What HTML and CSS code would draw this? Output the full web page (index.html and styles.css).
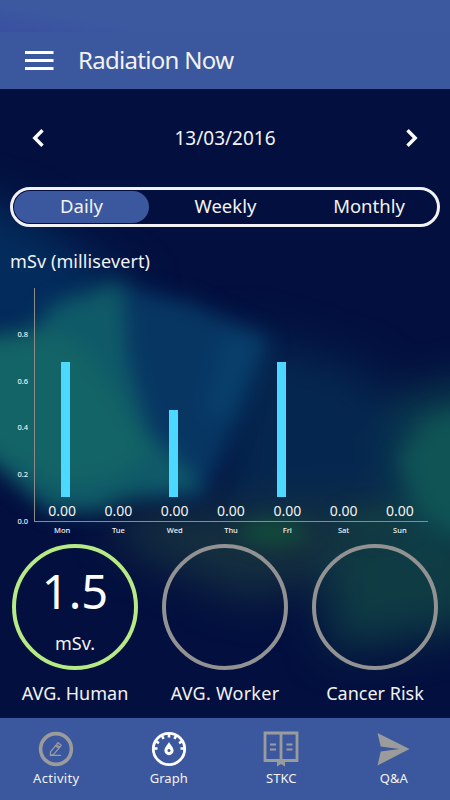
FILE: index.html
```html
<!DOCTYPE html>
<html lang="en">
<head>
  <meta charset="UTF-8">
  <meta name="viewport" content="width=device-width, initial-scale=1.0">
  <title>Radiation Now</title>
  <link rel="stylesheet" href="styles.css">
</head>
<body>
  <div class="app">
    <svg class="backdrop" viewBox="0 0 450 800" aria-hidden="true">
      <defs>
        <filter id="soft" x="-50%" y="-50%" width="200%" height="200%" color-interpolation-filters="sRGB"><feGaussianBlur stdDeviation="10"/></filter>
        <filter id="softer" x="-50%" y="-50%" width="200%" height="200%" color-interpolation-filters="sRGB"><feGaussianBlur stdDeviation="22"/></filter>
      </defs>
      <rect width="450" height="800" fill="#03103f"/>
      <g filter="url(#softer)">
        <polygon points="-60,190 20,210 140,290 60,360 -60,340" fill="#032c5c"/>
        <polygon points="235,330 370,370 420,470 400,530 220,530" fill="#05274f"/>
        <polygon points="110,510 420,500 420,545 250,600 130,550" fill="#15303f"/>
        <polygon points="395,400 490,380 490,640 400,560" fill="#0c4450"/>
        <polygon points="325,540 490,530 490,625 330,650" fill="#0f3c44"/>
      </g>
      <g filter="url(#soft)">
        <polygon points="120,285 190,302 270,338 225,450 200,500 100,500" fill="#073663"/>
        <polygon points="225,330 266,340 232,425 205,410" fill="#083f6b"/>
        <polygon points="-30,338 35,328 52,305 122,280 128,360 148,430 205,488 130,498 100,512 50,512 -30,445" fill="#0f5a68"/>
        <polygon points="-30,342 50,332 85,350 150,450 120,475 60,485 -30,440" fill="#136466"/>
        <polygon points="400,458 428,422 480,405 480,550 420,510" fill="#105455"/>
        <ellipse cx="273" cy="532" rx="34" ry="11" fill="#12503a"/>
        <ellipse cx="375" cy="522" rx="36" ry="12" fill="#113c43"/>
      </g>
    </svg>

    <div class="status-bar"></div>
    <header class="header">
      <svg class="menu-icon" width="29" height="20" viewBox="0 0 29 20">
        <path d="M0 2.500h28.500M0 10.500h28.500M0 18.500h28.500" stroke="#fff" stroke-width="3"/>
      </svg>
      <h1 class="title">Radiation Now</h1>
    </header>

    <div class="date-row">
      <svg width="12" height="18" viewBox="0 0 12 18"><path d="M10.500 1.200L2.800 9l7.700 7.800" fill="none" stroke="#fff" stroke-width="3.400"/></svg>
      <span class="date">13/03/2016</span>
      <svg width="12" height="18" viewBox="0 0 12 18"><path d="M1.500 1.200L9.200 9l-7.700 7.800" fill="none" stroke="#fff" stroke-width="3.400"/></svg>
    </div>

    <div class="tabs">
      <div class="tab active">Daily</div>
      <div class="tab weekly">Weekly</div>
      <div class="tab monthly">Monthly</div>
    </div>

    <div class="unit">mSv (millisevert)</div>

    <div class="chart">
      <div class="y-axis">
        <span>0.8</span>
        <span>0.6</span>
        <span>0.4</span>
        <span>0.2</span>
        <span>0.0</span>
      </div>
      <div class="chart-main">
        <div class="plot">
          <div class="bars">
            <div class="slot"><div class="bar" style="height: 135px"></div></div>
            <div class="slot"></div>
            <div class="slot"><div class="bar" style="height: 87px"></div></div>
            <div class="slot"></div>
            <div class="slot"><div class="bar" style="height: 135px"></div></div>
            <div class="slot"></div>
            <div class="slot"></div>
          </div>
          <div class="values">
            <span>0.00</span><span>0.00</span><span>0.00</span><span>0.00</span><span>0.00</span><span>0.00</span><span>0.00</span>
          </div>
        </div>
        <div class="days">
          <span>Mon</span><span>Tue</span><span>Wed</span><span>Thu</span><span>Fri</span><span>Sat</span><span>Sun</span>
        </div>
      </div>
    </div>

    <div class="gauges">
      <div class="gauge">
        <div class="ring green">
          <span class="number">1.5</span>
          <span class="msv">mSv.</span>
        </div>
        <div class="caption">AVG. Human</div>
      </div>
      <div class="gauge">
        <div class="ring"></div>
        <div class="caption worker">AVG. Worker</div>
      </div>
      <div class="gauge">
        <div class="ring"></div>
        <div class="caption">Cancer Risk</div>
      </div>
    </div>

    <nav class="nav">
      <div class="nav-item activity">
        <svg width="36" height="36" viewBox="0 0 36 36" fill="none" stroke="#9b9b9b">
          <circle cx="18" cy="18" r="15.400" stroke-width="3.600"/>
          <path d="M12.500 20.800l6-7.200 3.200 2.700-6 7-3.200 1zM17.700 14.700l3.200 2.700M18.600 13.300l1.400-1.700 3.200 2.800-1.400 1.600M12.300 24.400H23" stroke-width="1.300"/>
        </svg>
        <span>Activity</span>
      </div>
      <div class="nav-item">
        <svg width="36" height="36" viewBox="0 0 36 36" fill="none" stroke="#fff">
          <circle cx="18" cy="18" r="15.700" stroke-width="2.800"/>
          <path d="M2 17.500h4.500M29.500 17.500H34M4 9.800l4 2.300M32 9.800l-4 2.300M10.500 4l2.100 3.800M25.500 4l-2.100 3.800M18 2v4.500" stroke-width="2.600"/>
          <path d="M18 11c1.200 2.700 4.600 5.300 4.600 8.600a4.600 4.600 0 0 1-9.200 0c0-3.300 3.400-5.900 4.600-8.600z" fill="#fff" stroke="none"/>
          <circle cx="18" cy="19.500" r="1.500" fill="#3b589e" stroke="none"/>
        </svg>
        <span>Graph</span>
      </div>
      <div class="nav-item">
        <svg width="36" height="36" viewBox="0 0 36 36" fill="none" stroke="#9b9b9b">
          <path d="M2 2h32v27.500H2zM18 2v28" stroke-width="2.800"/>
          <path d="M7 13.500h6M7 18.500h6M23.500 13.500h6M23.500 18.500h6" stroke-width="1.800"/>
          <path d="M14 29h8v6.500l-4-2.500-4 2.500z" fill="#9b9b9b" stroke="none"/>
        </svg>
        <span>STKC</span>
      </div>
      <div class="nav-item">
        <svg width="36" height="36" viewBox="0 0 36 36">
          <path d="M1.500 2l32 16L1.500 34.500l3.200-14L23.500 18 4.700 15.500z" fill="#9b9b9b"/>
        </svg>
        <span>Q&amp;A</span>
      </div>
    </nav>
  </div>
</body>
</html>
```

FILE: styles.css
```css
* {
  box-sizing: border-box;
}

body {
  margin: 0;
  font-family: "Noto Sans", sans-serif;
  color: #f2f2f2;
  background-color: #03103f;
}

.app {
  position: relative;
  width: 450px;
  height: 800px;
  overflow: hidden;
  display: flex;
  flex-direction: column;
}

.app > * {
  flex-shrink: 0;
}

.backdrop {
  position: absolute;
  top: 0;
  left: 0;
  width: 450px;
  height: 800px;
  z-index: -1;
}

.status-bar {
  height: 32px;
  background: linear-gradient(190deg, #3c59a0 75%, #3a4fa0);
}

.header {
  height: 57px;
  background-color: #3b589e;
  display: flex;
  align-items: center;
  gap: 24px;
  padding-left: 25px;
}

.menu-icon {
  margin-bottom: 1px;
}

.title {
  margin: 0;
  font-size: 24px;
  font-weight: 400;
  line-height: 55px;
  letter-spacing: -0.7px;
  white-space: nowrap;
  padding-bottom: 2px;
}

.date-row {
  height: 98px;
  padding: 0 32px;
  display: flex;
  align-items: center;
  justify-content: space-between;
}

.date {
  font-size: 19px;
  line-height: 24px;
}

.tabs {
  height: 40px;
  margin: 0 10px;
  padding: 1px;
  border: 3px solid #f2f2f5;
  border-radius: 20px;
  display: flex;
  justify-content: space-between;
  background-color: #03103f;
}

.tab {
  font-size: 18.5px;
  line-height: 30px;
  text-align: center;
}

.tab.active {
  width: 135px;
  background-color: #3b589e;
  border-radius: 16px;
}

.tab.weekly {
  width: 143px;
}

.tab.monthly {
  width: 134px;
}

.unit {
  height: 61px;
  padding-left: 10px;
  font-size: 18px;
  letter-spacing: 0.1px;
  line-height: 68px;
}

.chart {
  height: 251px;
  display: flex;
}

.y-axis {
  width: 34px;
  padding-right: 6px;
  display: flex;
  flex-direction: column;
  height: 257px;
  padding-top: 23px;
  font-size: 7.5px;
  font-weight: 500;
  line-height: 46.7px;
  text-align: right;
}

.chart-main {
  width: 394px;
}

.plot {
  height: 234px;
  border-left: 1px solid #8b8b8b;
  border-bottom: 1px solid #8b8b8b;
  display: flex;
  flex-direction: column;
  justify-content: flex-end;
}

.bars {
  width: 379px;
  margin-left: 3px;
  height: 209px;
  display: flex;
}

.slot {
  flex: 1;
  display: flex;
  align-items: flex-end;
  justify-content: center;
}

.bar {
  width: 9px;
  background-color: #4dd8ff;
}

.values,
.days {
  display: flex;
  margin-left: -1px;
  text-align: center;
}

.values {
  font-size: 14px;
  line-height: 28px;
  height: 24px;
}

.values span,
.days span {
  flex: 1;
}

.days {
  margin-left: 0;
  font-size: 7.5px;
  font-weight: 500;
  line-height: 16px;
}

.gauges {
  height: 179px;
  padding-top: 5px;
  display: flex;
}

.gauge {
  flex: 1;
  display: flex;
  flex-direction: column;
  align-items: center;
}

.ring {
  width: 126px;
  height: 126px;
  border: 4px solid #929292;
  border-radius: 50%;
  display: flex;
  flex-direction: column;
  align-items: center;
}

.ring.green {
  border-color: #b7e985;
}

.number {
  color: #fff;
  font-size: 47px;
  line-height: 86px;
}

.msv {
  font-size: 18px;
  line-height: 19px;
}

.caption {
  font-size: 18px;
  line-height: 46px;
  white-space: nowrap;
}

.caption.worker {
  letter-spacing: 0.25px;
}

.nav {
  height: 82px;
  background-color: #3b589e;
  display: flex;
}

.nav-item {
  flex: 1;
  padding-top: 13px;
  display: flex;
  flex-direction: column;
  align-items: center;
  font-size: 13px;
  line-height: 23px;
}

.nav-item.activity {
  letter-spacing: 0.3px;
}
```
